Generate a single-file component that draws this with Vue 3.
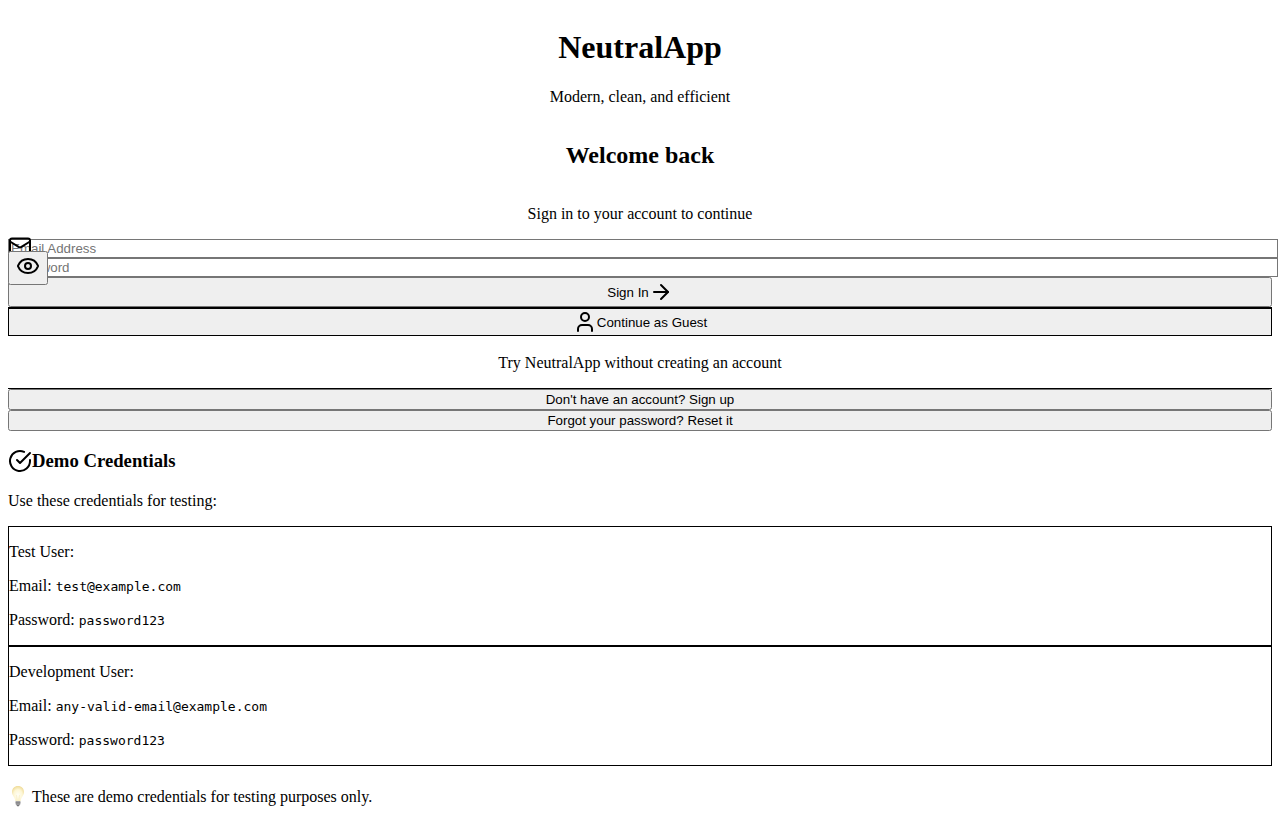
<script setup>
import { ref } from 'vue'

const email = ref('')
const password = ref('')
const showPassword = ref(false)

const accounts = [
  { title: 'Test User:', email: 'test@example.com', password: 'password123' },
  { title: 'Development User:', email: 'any-valid-email@example.com', password: 'password123' },
]
</script>

<template>
  <main class="page">
    <header class="intro">
      <h1>NeutralApp</h1>
      <p>Modern, clean, and efficient</p>
    </header>

    <section class="intro welcome">
      <h2>Welcome back</h2>
      <p>Sign in to your account to continue</p>
    </section>

    <form @submit.prevent>
      <div class="field">
        <input v-model="email" type="email" placeholder="Email Address" aria-label="Email Address" />
        <span class="overlay">
          <svg class="icon" viewBox="0 0 24 24" aria-hidden="true">
            <rect x="2" y="4" width="20" height="16" rx="2" />
            <path d="m22 7-8.97 5.7a1.94 1.94 0 0 1-2.06 0L2 7" />
          </svg>
        </span>
      </div>
      <div class="field">
        <input
          v-model="password"
          :type="showPassword ? 'text' : 'password'"
          placeholder="Password"
          aria-label="Password"
        />
        <button class="overlay toggle" type="button" aria-label="Show password" @click="showPassword = !showPassword">
          <svg class="icon" viewBox="0 0 24 24" aria-hidden="true">
            <path d="M2.062 12.348a1 1 0 0 1 0-.696 10.75 10.75 0 0 1 19.876 0 1 1 0 0 1 0 .696 10.75 10.75 0 0 1-19.876 0" />
            <circle cx="12" cy="12" r="3" />
          </svg>
        </button>
      </div>
      <button class="wide" type="submit">
        Sign In
        <svg class="icon" viewBox="0 0 24 24" aria-hidden="true">
          <path d="M5 12h14" />
          <path d="m12 5 7 7-7 7" />
        </svg>
      </button>
    </form>

    <section class="guest">
      <button class="wide outlined" type="button">
        <svg class="icon" viewBox="0 0 24 24" aria-hidden="true">
          <path d="M19 21v-2a4 4 0 0 0-4-4H9a4 4 0 0 0-4 4v2" />
          <circle cx="12" cy="7" r="4" />
        </svg>
        Continue as Guest
      </button>
      <p>Try NeutralApp without creating an account</p>
    </section>

    <section class="links">
      <button class="wide" type="button">Don't have an account? Sign up</button>
      <button class="wide" type="button">Forgot your password? Reset it</button>
    </section>

    <section>
      <h3>
        <svg class="icon" viewBox="0 0 24 24" aria-hidden="true">
          <path d="M22 11.08V12a10 10 0 1 1-5.93-9.14" />
          <path d="m9 11 3 3L22 4" />
        </svg>
        Demo Credentials
      </h3>
      <p>Use these credentials for testing:</p>
      <div v-for="account in accounts" :key="account.title" class="account">
        <p>{{ account.title }}</p>
        <p>Email: <code>{{ account.email }}</code></p>
        <p>Password: <code>{{ account.password }}</code></p>
      </div>
      <p class="note">
        <svg class="bulb" viewBox="0 0 20 22" aria-hidden="true">
          <defs>
            <radialGradient id="glow" cx="0.5" cy="0.6" r="0.6">
              <stop offset="0" stop-color="#fffef6" />
              <stop offset="0.6" stop-color="#fdf6d4" />
              <stop offset="1" stop-color="#efdb98" />
            </radialGradient>
          </defs>
          <path d="M10 0C6.400 0 4 2.600 4 6c0 3.200 2.800 5 3.400 9h5.200c.6-4 3.400-5.800 3.400-9 0-3.400-2.400-6-6-6z" fill="url(#glow)" />
          <path d="M8.500 9 9.200 15M11.500 9 10.800 15" fill="none" stroke="#f2e6b8" stroke-width=".5" />
          <path d="M7.600 15h4.800v3L11.500 19.500h-3L7.600 18z" fill="#a9a9ab" />
          <path d="M7.600 16.400h4.800M7.800 17.900h4.400" stroke="#77777a" stroke-width=".7" />
          <path d="M8.700 19.200h2.600l-.6 1H9.300z" fill="#555558" />
        </svg>
        These are demo credentials for testing purposes only.
      </p>
    </section>
  </main>
</template>

<style>
body {
  background: #fff;
}
</style>

<style scoped>
.page {
  display: flex;
  flex-direction: column;
  padding: 8px;
  color: #000;
  font-family: "Liberation Serif", "Times New Roman", serif;
  font-size: 16px;
  line-height: 18px;
}

p {
  margin: 16px 0;
}

h1 {
  margin: 21px 0 22px;
  font-size: 32px;
  line-height: 37px;
}

h2 {
  margin: 20px 0;
  font-size: 24px;
  line-height: 27px;
}

h3 {
  display: flex;
  align-items: center;
  margin: 18px 0 19px;
  line-height: 22px;
}

.intro {
  text-align: center;
}

.welcome {
  display: flex;
  flex-direction: column;
}

.icon {
  flex: none;
  width: 24px;
  height: 24px;
  fill: none;
  stroke: #000;
  stroke-width: 2;
  stroke-linecap: round;
  stroke-linejoin: round;
}

.field {
  position: relative;
  display: flex;
}

input {
  flex: none;
  box-sizing: content-box;
  width: 100%;
  height: 15px;
  margin: 0;
  padding: 1px 2px;
  border: 1px solid #767676;
  border-radius: 0;
  background: #fff;
  font-family: "Liberation Sans", Arial, sans-serif;
}

input::placeholder {
  color: #757575;
}

.overlay {
  position: absolute;
  top: 50%;
  left: 0;
  line-height: 20px;
  transform: translateY(-50%);
}

.toggle {
  padding: 1px 6px 2px;
  font-family: "Liberation Sans", Arial, sans-serif;
  line-height: normal;
}

.wide {
  display: inline-flex;
  align-items: center;
  justify-content: center;
  width: 100%;
  margin: 0;
  font-family: "Liberation Sans", Arial, sans-serif;
}

form,
.links {
  display: flex;
  flex-direction: column;
}

.guest,
.links {
  border-top: 1px solid #000;
}

.guest {
  text-align: center;
}

.outlined {
  border: 1px solid #000;
  border-radius: 0;
}

.account {
  display: flow-root;
  border: 1px solid #000;
}

code {
  font-family: "DejaVu Sans Mono", monospace;
  font-size: 13px;
  line-height: 14px;
}

.note {
  display: flex;
  align-items: center;
  gap: 4px;
  margin-top: 20px;
}

.bulb {
  flex: none;
  width: 20px;
  height: 22px;
}
</style>
